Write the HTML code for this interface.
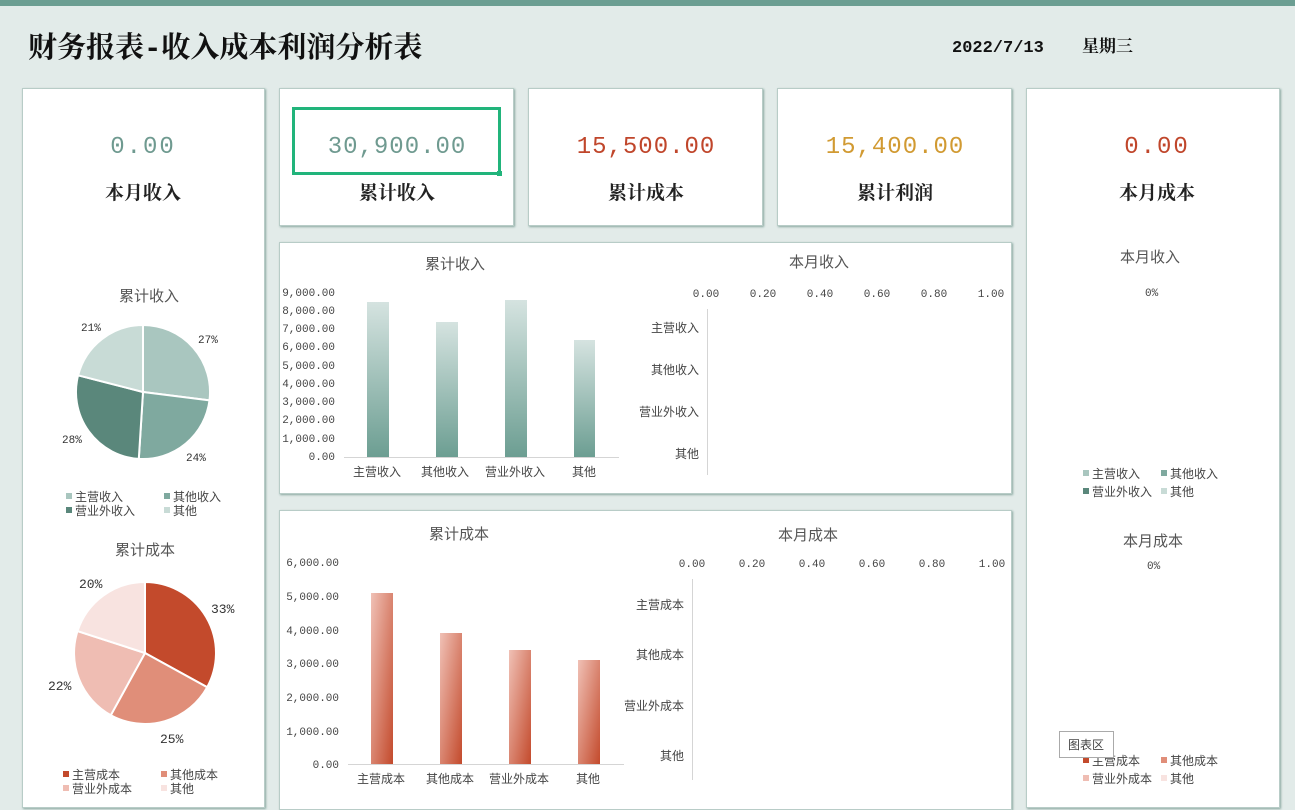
<!DOCTYPE html>
<html><head><meta charset="utf-8"><style>
body{margin:0;width:1295px;height:800px;overflow:hidden;background:#e2ebe9;position:relative;font-family:"Liberation Serif","Noto Serif CJK SC",serif}
.card{position:absolute;background:#fff;box-shadow:1px 1px 2px #8aa8a0;border:1px solid #b8ccc7;box-sizing:border-box}
svg{position:absolute;left:0;top:0}
</style></head><body>
<div style="position:absolute;left:0;top:0;width:1295px;height:6px;background:#6b9e92"></div>
<div class="card" style="left:22px;top:88px;width:243px;height:720px"></div>
<div class="card" style="left:279px;top:88px;width:235px;height:138px"></div>
<div class="card" style="left:528px;top:88px;width:235px;height:138px"></div>
<div class="card" style="left:777px;top:88px;width:235px;height:138px"></div>
<div class="card" style="left:1026px;top:88px;width:254px;height:720px"></div>
<div class="card" style="left:279px;top:242px;width:733px;height:252px"></div>
<div class="card" style="left:279px;top:510px;width:733px;height:300px"></div>
<svg width="1295" height="800" font-family="Liberation Sans,Noto Sans CJK SC,sans-serif">
<defs>
<linearGradient id="g1" x1="0" y1="0" x2="0" y2="1"><stop offset="0" stop-color="#d5e3e0"/><stop offset="1" stop-color="#6c9e92"/></linearGradient>
<linearGradient id="g2" x1="0" y1="0" x2="1" y2="1"><stop offset="0" stop-color="#f0c1b6"/><stop offset="1" stop-color="#c34a2c"/></linearGradient>
</defs>
<text x="28" y="57" font-size="29" font-weight="bold" font-family="Liberation Mono,Noto Serif CJK SC,serif" fill="#111">财务报表-收入成本利润分析表</text>
<text x="952" y="52" font-size="17" font-weight="bold" font-family="Liberation Mono,Noto Serif CJK SC,serif" fill="#111">2022/7/13</text>
<text x="1082" y="52" font-size="17" font-weight="bold" font-family="Liberation Serif,Noto Serif CJK SC,serif" fill="#111">星期三</text>
<g font-family="Liberation Mono,Noto Serif CJK SC,monospace" font-size="24" text-anchor="middle" font-weight="normal">
<text x="143" y="153" fill="#6f9a90" letter-spacing="2">0.00</text>
<text x="397" y="153" fill="#6f9a90" letter-spacing="1">30,900.00</text>
<text x="646" y="153" fill="#c0462b" letter-spacing="1">15,500.00</text>
<text x="895" y="153" fill="#d19a32" letter-spacing="1">15,400.00</text>
<text x="1157" y="153" fill="#c0462b" letter-spacing="2">0.00</text>
</g>
<rect x="293.5" y="108.5" width="206" height="65" fill="none" stroke="#21b47b" stroke-width="3"/>
<rect x="497" y="171" width="5" height="5" fill="#21b47b"/>
<g font-family="Liberation Serif,Noto Serif CJK SC,serif" font-size="19" font-weight="bold" text-anchor="middle" fill="#222">
<text x="143" y="199">本月收入</text><text x="397" y="199">累计收入</text><text x="646" y="199">累计成本</text><text x="895" y="199">累计利润</text><text x="1157" y="199">本月成本</text>
</g>
<g fill="#555" font-size="15" text-anchor="middle">
<text x="149" y="301">累计收入</text><text x="145" y="555">累计成本</text>
<text x="455" y="269">累计收入</text><text x="819" y="267">本月收入</text>
<text x="459" y="539">累计成本</text><text x="808" y="540">本月成本</text>
<text x="1150" y="262">本月收入</text><text x="1153" y="546">本月成本</text>
</g>
<g stroke="#fff" stroke-width="2">
<path d="M143,392 L143,325 A67,67 0 0 1 209.5,400.4Z" fill="#a9c6bf"/>
<path d="M143,392 L209.5,400.4 A67,67 0 0 1 138.8,458.9Z" fill="#7fa99f"/>
<path d="M143,392 L138.8,458.9 A67,67 0 0 1 78.1,375.3Z" fill="#5a877b"/>
<path d="M143,392 L78.1,375.3 A67,67 0 0 1 143,325Z" fill="#c8dbd6"/>
<path d="M145,653 L145,582 A71,71 0 0 1 207.2,687.2Z" fill="#c34a2c"/>
<path d="M145,653 L207.2,687.2 A71,71 0 0 1 110.8,715.2Z" fill="#e08e79"/>
<path d="M145,653 L110.8,715.2 A71,71 0 0 1 77.5,631.1Z" fill="#efbdb3"/>
<path d="M145,653 L77.5,631.1 A71,71 0 0 1 145,582Z" fill="#f8e3e0"/>
</g>
<g font-size="11" fill="#333" font-family="Liberation Mono,monospace">
<text x="198" y="343">27%</text><text x="186" y="461">24%</text><text x="62" y="443">28%</text><text x="81" y="331">21%</text>
</g>
<g font-size="13" fill="#333" font-family="Liberation Mono,monospace">
<text x="211" y="613">33%</text><text x="160" y="743">25%</text><text x="48" y="690">22%</text><text x="79" y="588">20%</text>
</g>
<g font-size="12" fill="#444">
<rect x="66" y="493" width="6" height="6" fill="#a9c6bf"/><text x="75" y="501">主营收入</text>
<rect x="164" y="493" width="6" height="6" fill="#7fa99f"/><text x="173" y="501">其他收入</text>
<rect x="66" y="507" width="6" height="6" fill="#5a877b"/><text x="75" y="515">营业外收入</text>
<rect x="164" y="507" width="6" height="6" fill="#c8dbd6"/><text x="173" y="515">其他</text>
<rect x="63" y="771" width="6" height="6" fill="#c34a2c"/><text x="72" y="779">主营成本</text>
<rect x="161" y="771" width="6" height="6" fill="#e08e79"/><text x="170" y="779">其他成本</text>
<rect x="63" y="785" width="6" height="6" fill="#efbdb3"/><text x="72" y="793">营业外成本</text>
<rect x="161" y="785" width="6" height="6" fill="#f8e3e0"/><text x="170" y="793">其他</text>
<rect x="1083" y="470" width="6" height="6" fill="#a9c6bf"/><text x="1092" y="478">主营收入</text>
<rect x="1161" y="470" width="6" height="6" fill="#7fa99f"/><text x="1170" y="478">其他收入</text>
<rect x="1083" y="488" width="6" height="6" fill="#5a877b"/><text x="1092" y="496">营业外收入</text>
<rect x="1161" y="488" width="6" height="6" fill="#c8dbd6"/><text x="1170" y="496">其他</text>
<rect x="1083" y="757" width="6" height="6" fill="#c34a2c"/><text x="1092" y="765">主营成本</text>
<rect x="1161" y="757" width="6" height="6" fill="#e08e79"/><text x="1170" y="765">其他成本</text>
<rect x="1083" y="775" width="6" height="6" fill="#efbdb3"/><text x="1092" y="783">营业外成本</text>
<rect x="1161" y="775" width="6" height="6" fill="#f8e3e0"/><text x="1170" y="783">其他</text>
</g>
<g font-size="11" fill="#444" font-family="Liberation Mono,monospace">
<text x="1145" y="296">0%</text><text x="1147" y="569">0%</text>
</g>
<g font-size="11" fill="#444" font-family="Liberation Mono,monospace" text-anchor="end">
<text x="335" y="296">9,000.00</text><text x="335" y="314">8,000.00</text><text x="335" y="332">7,000.00</text><text x="335" y="350">6,000.00</text><text x="335" y="369">5,000.00</text><text x="335" y="387">4,000.00</text><text x="335" y="405">3,000.00</text><text x="335" y="423">2,000.00</text><text x="335" y="442">1,000.00</text><text x="335" y="460">0.00</text>
<text x="339" y="566">6,000.00</text><text x="339" y="600">5,000.00</text><text x="339" y="634">4,000.00</text><text x="339" y="667">3,000.00</text><text x="339" y="701">2,000.00</text><text x="339" y="735">1,000.00</text><text x="339" y="768">0.00</text>
</g>
<g font-size="11" fill="#444" font-family="Liberation Mono,monospace" text-anchor="middle">
<text x="706" y="297">0.00</text><text x="763" y="297">0.20</text><text x="820" y="297">0.40</text><text x="877" y="297">0.60</text><text x="934" y="297">0.80</text><text x="991" y="297">1.00</text>
<text x="692" y="567">0.00</text><text x="752" y="567">0.20</text><text x="812" y="567">0.40</text><text x="872" y="567">0.60</text><text x="932" y="567">0.80</text><text x="992" y="567">1.00</text>
</g>
<line x1="344" y1="457.5" x2="619" y2="457.5" stroke="#d5d5d5"/>
<line x1="348" y1="764.5" x2="624" y2="764.5" stroke="#d5d5d5"/>
<line x1="707.5" y1="309" x2="707.5" y2="475" stroke="#d5d5d5"/>
<line x1="692.5" y1="579" x2="692.5" y2="780" stroke="#d5d5d5"/>
<rect x="367" y="302" width="22" height="155" fill="url(#g1)"/>
<rect x="436" y="322" width="22" height="135" fill="url(#g1)"/>
<rect x="505" y="300" width="22" height="157" fill="url(#g1)"/>
<rect x="574" y="340" width="21" height="117" fill="url(#g1)"/>
<rect x="371" y="593" width="22" height="171" fill="url(#g2)"/>
<rect x="440" y="633" width="22" height="131" fill="url(#g2)"/>
<rect x="509" y="650" width="22" height="114" fill="url(#g2)"/>
<rect x="578" y="660" width="22" height="104" fill="url(#g2)"/>
<g font-size="12" fill="#444" text-anchor="middle">
<text x="377" y="476">主营收入</text><text x="445" y="476">其他收入</text><text x="515" y="476">营业外收入</text><text x="584" y="476">其他</text>
<text x="381" y="783">主营成本</text><text x="450" y="783">其他成本</text><text x="519" y="783">营业外成本</text><text x="588" y="783">其他</text>
</g>
<g font-size="12" fill="#444" text-anchor="end">
<text x="699" y="332">主营收入</text><text x="699" y="374">其他收入</text><text x="699" y="416">营业外收入</text><text x="699" y="458">其他</text>
<text x="684" y="609">主营成本</text><text x="684" y="659">其他成本</text><text x="684" y="710">营业外成本</text><text x="684" y="760">其他</text>
</g>
<rect x="1059.5" y="731.5" width="54" height="26" fill="#fff" stroke="#aaa"/>
<text x="1068" y="749" font-size="12" fill="#444">图表区</text>
</svg>
</body></html>
